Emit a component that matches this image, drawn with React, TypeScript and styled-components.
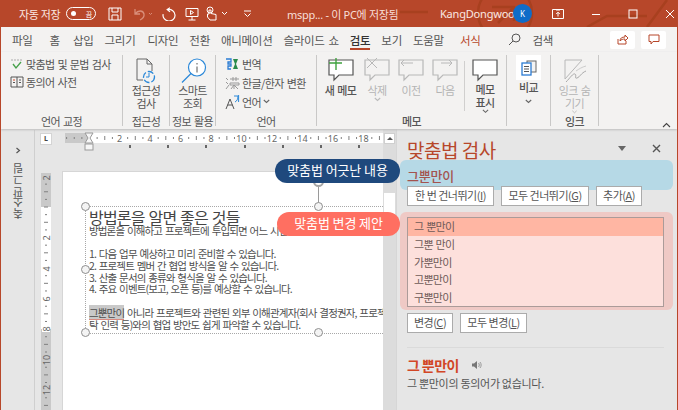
import React from "react";
import styled, { createGlobalStyle } from "styled-components";

const FONT = `"Noto Sans CJK KR", "Noto Sans", sans-serif`;

const GlobalStyle = createGlobalStyle`
  html, body { margin: 0; padding: 0; background: #e6e6e6; }
  * { box-sizing: border-box; }
`;

const Window = styled.div`
  width: 678px;
  height: 410px;
  overflow: hidden;
  display: flex;
  flex-direction: column;
  font-family: ${FONT};
  color: #444;
  border-left: 1px solid #b7472a;
  border-right: 1px solid #b7472a;
`;

/* title bar */
const TitleBar = styled.div`
  position: relative;
  height: 27px;
  margin: 0 -1px;
  flex: none;
  background: #b7472a;
  color: #fff;
  display: flex;
  align-items: center;
  font-size: 11px;
  letter-spacing: -0.3px;
`;
const Pattern = styled.svg`
  position: absolute;
  right: 0;
  top: 0;
`;
const AutoSave = styled.span`
  flex: none;
  width: 41px;
  margin-left: 19px;
  white-space: nowrap;
  color: #fbe9e3;
`;
const Toggle = styled.span`
  flex: none;
  width: 30px;
  height: 13px;
  margin-left: 6px;
  border: 1px solid #fff;
  border-radius: 7px;
  display: flex;
  align-items: center;
  justify-content: space-between;
  padding: 0 3px 0 4px;
  font-size: 7px;
  &::before {
    content: "";
    width: 5px;
    height: 5px;
    border-radius: 50%;
    background: #fff;
  }
`;
const QuickIcons = styled.div`
  flex: none;
  display: flex;
  align-items: center;
  margin-left: 12px;
  width: 158px;
`;
const QuickSlot = styled.span<{ $w: number }>`
  width: ${(p) => p.$w}px;
  display: flex;
  align-items: center;
`;
const DocName = styled.span`
  position: relative;
  flex: none;
  margin-left: 21px;
  width: 153px;
  font-family: "Noto Sans", ${FONT};
  font-size: 11px;
  letter-spacing: -0.3px;
  color: #f7dfd8;
  white-space: nowrap;
`;
const UserName = styled.span`
  position: relative;
  flex: none;
  width: 73px;
  font-family: "Noto Sans", sans-serif;
  font-size: 11px;
  letter-spacing: -0.2px;
  color: #fbe9e3;
`;
const Avatar = styled.span`
  position: relative;
  flex: none;
  width: 19px;
  height: 19px;
  border-radius: 50%;
  background: #0f6cc8;
  font-family: "Noto Sans", sans-serif;
  font-size: 8px;
  letter-spacing: 0;
  display: flex;
  align-items: center;
  justify-content: center;
`;
const WinButtons = styled.div`
  position: relative;
  display: flex;
  align-items: center;
  margin-left: 20px;
  gap: 27px;
`;

/* tabs */
const TabRow = styled.div`
  height: 25px;
  flex: none;
  background: #f3f2f1;
  display: flex;
  align-items: center;
  padding: 0 11px;
  gap: 11px;
  font-size: 11.5px;
  letter-spacing: -0.28px;
  word-spacing: 1.5px;
  color: #555;
`;
const Tab = styled.span<{ $extra?: number; $active?: boolean; $accent?: boolean }>`
  position: relative;
  margin-left: ${(p) => p.$extra ?? 0}px;
  white-space: nowrap;
  font-weight: ${(p) => (p.$active ? 500 : 400)};
  color: ${(p) => (p.$accent ? "#b7472a" : p.$active ? "#333" : "#555")};
  &::after {
    content: "";
    display: ${(p) => (p.$active ? "block" : "none")};
    position: absolute;
    left: 0;
    right: 0;
    bottom: -2px;
    height: 2px;
    background: #b7472a;
  }
`;
const SearchTab = styled.span`
  display: flex;
  align-items: center;
  gap: 11px;
  margin-left: 17px;
`;
const TabButton = styled.span<{ $first?: boolean }>`
  width: 25px;
  height: 18px;
  margin-left: ${(p) => (p.$first ? "auto" : "-5px")};
  background: #fff;
  border-radius: 2px;
  display: flex;
  align-items: center;
  justify-content: center;
`;

/* ribbon */
const Ribbon = styled.div`
  position: relative;
  height: 77px;
  flex: none;
  background: #f3f2f1;
  display: flex;
  font-size: 11px;
  letter-spacing: -0.6px;
  word-spacing: 1px;
  box-shadow: 0 1px 2px #bdbdbd;
  z-index: 2;
`;
const Group = styled.div<{ $w: number }>`
  position: relative;
  width: ${(p) => p.$w}px;
  flex: none;
  border-right: 1px solid #c9c8c7;
  margin: 3px 0;
  display: flex;
  flex-direction: column;
`;
const GroupBody = styled.div`
  flex: 1;
  display: flex;
  min-height: 0;
`;
const GroupLabel = styled.div<{ $strong?: boolean }>`
  height: 15px;
  margin-bottom: -3px;
  flex: none;
  text-align: center;
  line-height: 15px;
  font-weight: ${(p) => (p.$strong ? 500 : 400)};
  color: #555;
  white-space: nowrap;
`;
const Rows = styled.div<{ $gap: number; $left: number }>`
  display: flex;
  flex-direction: column;
  gap: ${(p) => p.$gap}px;
  padding: 1px 0 0 ${(p) => p.$left}px;
`;
const SmallRow = styled.div`
  display: flex;
  align-items: center;
  gap: 2px;
  height: 15px;
  white-space: nowrap;
  color: #555;
`;
const BigButton = styled.div<{ $w: number; $muted?: boolean; $boxed?: boolean; $strong?: boolean }>`
  width: ${(p) => p.$w}px;
  flex: none;
  display: flex;
  flex-direction: column;
  align-items: center;
  padding-top: ${(p) => (p.$boxed ? 0 : 3)}px;
  line-height: 13px;
  text-align: center;
  white-space: nowrap;
  font-weight: ${(p) => (p.$strong ? 500 : 400)};
  color: ${(p) => (p.$muted ? "#b4b4b4" : "#555")};
`;
const IconBox = styled.div<{ $boxed?: boolean }>`
  height: ${(p) => (p.$boxed ? 25 : 26)}px;
  width: ${(p) => (p.$boxed ? "25px" : "auto")};
  margin-bottom: ${(p) => (p.$boxed ? 1 : 0)}px;
  background: ${(p) => (p.$boxed ? "#fff" : "transparent")};
  display: flex;
  align-items: center;
  justify-content: center;
`;
const LowChevron = styled.span`
  display: flex;
  margin-top: 5px;
`;
const InnerSep = styled.div`
  width: 1px;
  height: 50px;
  margin: 6px 0 0 6px;
  background: #d0cfce;
`;
const Collapse = styled.svg`
  position: absolute;
  right: 6px;
  bottom: 1px;
`;

/* work area */
const Work = styled.div`
  flex: 1;
  min-height: 0;
  display: flex;
  background: #e6e6e6;
`;
const ThumbPane = styled.div`
  width: 34px;
  flex: none;
  border-right: 1px solid #cfcfcf;
  display: flex;
  flex-direction: column;
  align-items: center;
  padding-top: 17px;
  margin-top: 1px;
`;
const ThumbLabel = styled.span`
  margin-top: 9px;
  writing-mode: vertical-rl;
  transform: rotate(180deg);
  font-size: 11px;
  letter-spacing: -0.3px;
  color: #555;
`;
const Editor = styled.div`
  flex: 1;
  min-width: 0;
  display: flex;
`;
const Canvas = styled.div`
  position: relative;
  flex: 1;
  min-width: 0;
  overflow: hidden;
`;
const RulerCorner = styled.div`
  position: absolute;
  left: 5px;
  top: 4px;
  width: 12px;
  height: 12px;
  background: #fff;
  border: 1px solid #d4d4d4;
  font: 700 7px/10px "Noto Sans", sans-serif;
  text-align: center;
`;
const RulerSvg = styled.svg`
  position: absolute;
`;
const Slide = styled.div`
  position: absolute;
  left: 28px;
  top: 43px;
  width: 400px;
  height: 300px;
  background: #fff;
  box-shadow: 0 0 0 1px #d6d6d6;
`;
const TextBox = styled.div`
  position: absolute;
  left: 22px;
  top: 34px;
  width: 480px;
  height: 128px;
  border: 1px dotted #a8a8a8;
  padding: 0 0 0 3px;
  color: #4a4a4a;
`;
const Heading = styled.div`
  height: 18px;
  font-size: 16px;
  line-height: 21px;
  letter-spacing: -0.8px;
  word-spacing: 1px;
  color: #444;
`;
const BodyLine = styled.div`
  font-size: 10.5px;
  line-height: 11.7px;
  height: 11.7px;
  letter-spacing: -0.85px;
  word-spacing: 1.2px;
  white-space: nowrap;
  color: #4f4f4f;
`;
const Misspelled = styled.span`
  background: #c9c9c9;
  box-shadow: inset 0 -1px 0 #d98a80;
`;
const Handle = styled.span<{ $x: number; $y: number }>`
  position: absolute;
  left: ${(p) => p.$x}px;
  top: ${(p) => p.$y}px;
  width: 9px;
  height: 9px;
  border: 1.5px solid #8f8f8f;
  border-radius: 50%;
  background: #f4f4f4;
`;
const RotateHandle = styled.span`
  position: absolute;
  left: 227px;
  top: -31px;
  width: 11px;
  height: 11px;
  border: 2px solid #a5a5a5;
  border-radius: 50%;
`;
const RotateStem = styled.span`
  position: absolute;
  left: 232px;
  top: -20px;
  width: 1px;
  height: 16px;
  background: #9a9a9a;
`;
const ScrollBar = styled.div`
  width: 13px;
  flex: none;
  background: #dcdcdc;
  padding-top: 4px;
  display: flex;
  flex-direction: column;
  align-items: center;
`;
const ScrollUp = styled.div`
  width: 11px;
  height: 11px;
  background: #fff;
  border: 1px solid #cfcfcf;
  display: flex;
  align-items: center;
  justify-content: center;
  &::before {
    content: "";
    border: 3px solid transparent;
    border-top: 0;
    border-bottom: 3px solid #555;
  }
`;
const ScrollThumb = styled.div`
  width: 11px;
  height: 34px;
  margin-top: 49px;
  background: #fff;
`;

/* spelling pane */
const Pane = styled.div`
  position: relative;
  width: 281px;
  flex: none;
  background: #e6e6e6;
  border-left: 1px solid #d6d6d6;
  padding: 8px 13px 0 10px;
`;
const Highlight = styled.div<{ $top: number; $h: number; $c: string }>`
  position: absolute;
  left: 3px;
  right: 4px;
  top: ${(p) => p.$top}px;
  height: ${(p) => p.$h}px;
  border-radius: 6px;
  background: ${(p) => p.$c};
`;
const PaneInner = styled.div`
  position: relative;
`;
const PaneHead = styled.div`
  display: flex;
  align-items: center;
  justify-content: space-between;
  height: 25px;
`;
const PaneTitle = styled.div`
  font-size: 19px;
  letter-spacing: -0.5px;
  color: #b7472a;
`;
const PaneTools = styled.div`
  display: flex;
  align-items: center;
  gap: 26px;
  margin: 0 3px 3px 0;
`;
const BadWord = styled.div`
  margin-top: 5px;
  height: 18px;
  font-size: 13px;
  font-weight: 500;
  line-height: 18px;
  letter-spacing: -0.2px;
  color: #a4534f;
`;
const ButtonRow = styled.div<{ $mt: number }>`
  display: flex;
  gap: 7px;
  margin-top: ${(p) => p.$mt}px;
`;
const PaneButton = styled.div<{ $w: number }>`
  width: ${(p) => p.$w}px;
  height: 20px;
  background: #fff;
  border: 1px solid #ababab;
  font-size: 11px;
  line-height: 17px;
  letter-spacing: -0.5px;
  text-align: center;
  white-space: nowrap;
  color: #555;
`;
const List = styled.div`
  margin-top: 11px;
  width: 257px;
  height: 90px;
  background: #fde0dc;
  border: 1px solid #ab9b99;
`;
const ListRow = styled.div<{ $sel?: boolean }>`
  height: 17.8px;
  padding-left: 6px;
  background: ${(p) => (p.$sel ? "#ffb6a3" : "transparent")};
  font-size: 11px;
  line-height: 17px;
  letter-spacing: -0.7px;
  word-spacing: 1px;
  color: #6e5a58;
`;
const Divider = styled.div`
  height: 1px;
  margin-top: 14px;
  background: #dadada;
`;
const DefHead = styled.div`
  display: flex;
  align-items: center;
  gap: 12px;
  margin-top: 7px;
  height: 20px;
  font-size: 14px;
  font-weight: 700;
  letter-spacing: -0.6px;
  color: #d24726;
`;
const DefText = styled.div`
  font-size: 11px;
  letter-spacing: -0.3px;
  color: #555;
`;

/* callouts */
const Callout = styled.div<{ $top: number; $left: number; $w: number; $c: string }>`
  position: absolute;
  z-index: 3;
  left: ${(p) => p.$left}px;
  top: ${(p) => p.$top}px;
  width: ${(p) => p.$w}px;
  height: 24px;
  border-radius: 12px;
  background: ${(p) => p.$c};
  color: #fff;
  font-size: 13px;
  line-height: 22px;
  letter-spacing: -0.1px;
  text-align: center;
  white-space: nowrap;
`;

const Chevron = ({ c = "#666" }: { c?: string }) => (
  <svg width="7" height="5" viewBox="0 0 7 5">
    <path d="M.8 1l2.7 2.5L6.200 1" fill="none" stroke={c} strokeWidth="1.1" />
  </svg>
);

const Bubble = ({ c, children }: { c: string; children?: React.ReactNode }) => (
  <svg width="26" height="24" viewBox="0 0 26 24" style={{ overflow: "visible" }}>
    <path d="M1 1h24v15H11l-5 5v-5H1z" fill={c === "#b8b8b8" ? "#f3f2f1" : "#fff"} stroke={c} strokeWidth="1.2" />
    {children}
  </svg>
);

const rulerNums = [2, 4, 6, 8, 10, 12, 14, 16, 18];

const HRuler = () => (
  <RulerSvg width="320" height="20" viewBox="0 0 320 20" style={{ left: 30, top: 3 }}>
    <rect x="0" y="1" width="24" height="10" fill="#c9c9c9" />
    <rect x="24" y="1" width="294" height="10" fill="#fff" />
    {Array.from({ length: 42 }, (_, i) => {
      const x = 24 + (i - 3) * 7.63;
      if ((i - 3) % 4 === 0 && i > 3) return null;
      return <rect key={i} x={x} y={(i - 3) % 4 === 2 ? 4 : 5} width="1" height={(i - 3) % 4 === 2 ? 4 : 2} fill="#808080" />;
    })}
    {rulerNums.map((n) => (
      <text key={n} x={24 + n * 15.25} y="9.500" textAnchor="middle" fontSize="9" fontFamily="Noto Sans" fill="#666">
        {n}
      </text>
    ))}
    {[64, 102, 140, 179, 217, 255, 293].map((x) => (
      <rect key={x} x={x} y="13" width="2" height="3" fill="#666" />
    ))}
    <path d="M20 1h8l-3 5 3 5h-8l3-5z" fill="#f6f6f6" stroke="#999" />
    <rect x="20" y="12" width="8" height="6" fill="#f6f6f6" stroke="#999" />
  </RulerSvg>
);

const VRuler = () => (
  <RulerSvg width="12" height="240" viewBox="0 0 12 240" style={{ left: 6, top: 44 }}>
    <rect x="0" y="0" width="10" height="34" fill="#c9c9c9" />
    <rect x="0" y="34" width="10" height="122" fill="#fff" />
    <rect x="0" y="156" width="10" height="84" fill="#c9c9c9" />
    {Array.from({ length: 32 }, (_, i) => (
      <rect key={i} x={i % 2 ? 4 : 3} y={3 + i * 7.63} width={i % 2 ? 2 : 4} height="1" fill="#808080" />
    ))}
    {[
      [5, "2"],
      [65, "2"],
      [96, "4"],
      [126, "6"],
      [156, "8"],
      [187, "10"],
      [217, "12"],
    ].map(([y, t]) => (
      <g key={String(y)}>
        <rect x="1" y={Number(y) - (String(t).length > 1 ? 6 : 3)} width="8" height={String(t).length > 1 ? 12 : 6} fill={Number(y) < 34 || Number(y) > 156 ? "#c9c9c9" : "#fff"} />
        <text
          transform={`translate(8.500 ${y}) rotate(-90)`}
          textAnchor="middle"
          fontSize="9"
          fontFamily="Noto Sans"
          fill="#666"
        >
          {t}
        </text>
      </g>
    ))}
  </RulerSvg>
);

const RibbonPart = () => (
  <Ribbon>
    <Group $w={122}>
      <GroupBody>
        <Rows $gap={3} $left={9}>
          <SmallRow>
            <svg width="14" height="12" viewBox="0 0 14 12">
              <path d="M1 2h12" stroke="#aaa" strokeDasharray="2 1" />
              <path d="M3 6l3 4 5-6" fill="none" stroke="#46a04a" strokeWidth="1.3" />
            </svg>
            맞춤법 및 문법 검사
          </SmallRow>
          <SmallRow>
            <svg width="14" height="12" viewBox="0 0 14 12">
              <path d="M1 1h12v10H1zM7 1v10M3 6.500h2M9 4h2M9 6.500h2" fill="none" stroke="#555" />
              <path d="M3 4h2" stroke="#d24726" />
            </svg>
            동의어 사전
          </SmallRow>
        </Rows>
      </GroupBody>
      <GroupLabel>언어 교정</GroupLabel>
    </Group>
    <Group $w={47}>
      <GroupBody>
        <BigButton $w={46}>
          <IconBox>
            <svg width="24" height="26" viewBox="0 0 24 26">
              <path d="M3 1h10l5 5v7M13 1v5h5M3 1v21h6" fill="none" stroke="#666" />
              <circle cx="15" cy="19" r="5.500" fill="none" stroke="#2b88d8" strokeWidth="1.3" strokeDasharray="6 2" />
              <path d="M15 15v4h-3" fill="none" stroke="#2b88d8" />
            </svg>
          </IconBox>
          접근성
          <br />
          검사
        </BigButton>
      </GroupBody>
      <GroupLabel>접근성</GroupLabel>
    </Group>
    <Group $w={46}>
      <GroupBody>
        <BigButton $w={45}>
          <IconBox>
            <svg width="28" height="26" viewBox="0 0 28 26">
              <circle cx="18" cy="9.500" r="8.500" fill="#fff" stroke="#2b88d8" strokeWidth="1.2" />
              <path d="M12 15.500l-9 9" stroke="#2b88d8" strokeWidth="1.3" />
              <path d="M18 8.500v6M18 5v1.500" stroke="#555" />
            </svg>
          </IconBox>
          스마트
          <br />
          조회
        </BigButton>
      </GroupBody>
      <GroupLabel>정보 활용</GroupLabel>
    </Group>
    <Group $w={101}>
      <GroupBody>
        <Rows $gap={4} $left={9}>
          <SmallRow>
            <svg width="15" height="14" viewBox="0 0 15 14">
              <path d="M1 2h5v3H3v2h3v2H3v3h3" fill="none" stroke="#2b7cd3" strokeWidth="1.3" />
              <path d="M8 2h5l-2 5 2 5H8l2-5z" fill="#2a8a4a" />
            </svg>
            번역
          </SmallRow>
          <SmallRow>
            <svg width="15" height="14" viewBox="0 0 15 14">
              <path d="M1 2l2 2M1 6l2 2M1 13l3-4M5 3h9M8 1v4M11 1v4M5 7h9v2H5zM9 9v4M6 13l3-4 4 4" fill="none" stroke="#999" />
            </svg>
            한글/한자 변환
          </SmallRow>
          <SmallRow>
            <svg width="15" height="16" viewBox="0 0 15 16">
              <path d="M1 15l4-10 4 10M2.600 11h5" fill="none" stroke="#555" />
              <path d="M9 2h4c0 3-1 5-3 6M13.600 1v7" fill="none" stroke="#2b88d8" />
            </svg>
            언어 <Chevron />
          </SmallRow>
        </Rows>
      </GroupBody>
      <GroupLabel>언어</GroupLabel>
    </Group>
    <Group $w={190}>
      <GroupBody>
        <BigButton $w={47} $strong>
          <IconBox>
            <Bubble c="#555">
              <path d="M8 -1v12M1 4h13" stroke="#3fa33f" strokeWidth="1.4" />
            </Bubble>
          </IconBox>
          새 메모
        </BigButton>
        <BigButton $w={26} $muted>
          <IconBox>
            <Bubble c="#b8b8b8">
              <path d="M3 -1l10 10M13 -1l-10 10" stroke="#b8b8b8" />
            </Bubble>
          </IconBox>
          삭제
          <Chevron c="#bbb" />
        </BigButton>
        <BigButton $w={42} $muted>
          <IconBox>
            <Bubble c="#b8b8b8">
              <path d="M15 4H3l3-3M3 4l3 3" fill="none" stroke="#b8b8b8" />
            </Bubble>
          </IconBox>
          이전
        </BigButton>
        <BigButton $w={26} $muted>
          <IconBox>
            <Bubble c="#b8b8b8">
              <path d="M9 4h11l-3-3M20 4l-3 3" fill="none" stroke="#b8b8b8" />
            </Bubble>
          </IconBox>
          다음
        </BigButton>
        <InnerSep />
        <BigButton $w={40} $strong>
          <IconBox>
            <Bubble c="#555" />
          </IconBox>
          메모
          <br />
          표시 <Chevron />
        </BigButton>
      </GroupBody>
      <GroupLabel $strong>메모</GroupLabel>
    </Group>
    <Group $w={44}>
      <GroupBody>
        <BigButton $w={43} $boxed $strong>
          <IconBox $boxed>
            <svg width="16" height="16" viewBox="0 0 16 16">
              <rect x="6" y="1" width="9" height="11" fill="#f3f3f3" stroke="#666" />
              <rect x="1" y="3" width="9" height="12" fill="#fff" stroke="#2b7cd3" strokeWidth="1.3" />
              <path d="M3 6.500h5M3 9h5M3 11.500h5" stroke="#555" />
            </svg>
          </IconBox>
          비교
          <LowChevron>
            <Chevron />
          </LowChevron>
        </BigButton>
      </GroupBody>
      <GroupLabel />
    </Group>
    <Group $w={48}>
      <GroupBody>
        <BigButton $w={47} $muted>
          <IconBox>
            <svg width="28" height="26" viewBox="0 0 28 26">
              <path d="M4 2h17L4 21z" fill="#f3f2f1" stroke="#b8b8b8" />
              <path d="M5 24c4-4 7-9 9-8s-1 5 2 4 4-5 9-7" fill="none" stroke="#aaa" />
              <path d="M15 13c3-2 6-4 10-5" fill="none" stroke="#ccc" />
            </svg>
          </IconBox>
          잉크 숨
          <br />
          기기 <Chevron c="#bbb" />
        </BigButton>
      </GroupBody>
      <GroupLabel $strong>잉크</GroupLabel>
    </Group>
    <Collapse width="9" height="6" viewBox="0 0 9 6">
      <path d="M1 5l3.500-3.500L8 5" fill="none" stroke="#444" strokeWidth="1.1" />
    </Collapse>
  </Ribbon>
);

export default function App() {
  return (
    <>
      <GlobalStyle />
      <Window>
        <TitleBar>
          <Pattern width="278" height="27" viewBox="0 0 278 27">
            <g fill="none" stroke="#a8401f" strokeWidth="2.5">
              <circle cx="105" cy="13" r="27" />
              <path d="M92 7h22v14M114 7l-16 16M0 12h28M187 27l20-11h40M247 27l20-27" />
            </g>
          </Pattern>
          <AutoSave>자동 저장</AutoSave>
          <Toggle>끔</Toggle>
          <QuickIcons>
            <QuickSlot $w={24}>
              <svg width="14" height="14" viewBox="0 0 14 14">
                <path d="M1 1h12v12H1zM4 1v4h6V1M4 13V8h6v5" fill="none" stroke="#fff" />
              </svg>
            </QuickSlot>
            <QuickSlot $w={30}>
              <svg width="22" height="14" viewBox="0 0 22 14">
                <path d="M3 2v5h5M3 7c3-4 8-4 9 0 .5 3-2 5-4 6" fill="none" stroke="#d98d79" strokeWidth="1.3" />
                <path d="M17 6l1.500 1.500L20 6" fill="none" stroke="#d98d79" />
              </svg>
            </QuickSlot>
            <QuickSlot $w={23}>
              <svg width="14" height="14" viewBox="0 0 14 14">
                <path d="M8 .8L5.200 2.500 8 4.800M5.500 2.500C9.500 1.800 13 4.500 13 8a6 5.500 0 1 1-11.800-.8" fill="none" stroke="#fff" strokeWidth="1.2" />
              </svg>
            </QuickSlot>
            <QuickSlot $w={20}>
              <svg width="14" height="14" viewBox="0 0 14 14">
                <path d="M1 1.500h12v8H1zM7 9.500V13M3.500 13h7M5.500 3.500v4l3-2z" fill="none" stroke="#fff" />
              </svg>
            </QuickSlot>
            <QuickSlot $w={38}>
              <svg width="24" height="15" viewBox="0 0 24 15">
                <circle cx="5" cy="4" r="3" fill="none" stroke="#fff" />
                <path d="M4 4v4H2.500v3L5 14h6V8.500L6 7.500V4z" fill="none" stroke="#fff" />
                <path d="M17 6l2.500 2.500L22 6" fill="none" stroke="#fff" />
              </svg>
            </QuickSlot>
            <svg width="9" height="9" viewBox="0 0 9 9">
              <path d="M1 2h7M1.500 4.500l3 3 3-3" fill="none" stroke="#fff" />
            </svg>
          </QuickIcons>
          <DocName>mspp... - 이 PC에 저장됨</DocName>
          <UserName>KangDongwoo</UserName>
          <Avatar>K</Avatar>
          <WinButtons>
            <svg width="12" height="10" viewBox="0 0 12 10">
              <path d="M.5.500h11v9H.5zM4 1h4M6 7.500V3.500M4.200 5L6 3.200 7.800 5" fill="none" stroke="#fff" />
            </svg>
            <svg width="10" height="10" viewBox="0 0 10 10">
              <path d="M1 5.500h8" stroke="#fff" />
            </svg>
            <svg width="10" height="10" viewBox="0 0 10 10">
              <rect x="1" y="1" width="8" height="8" fill="none" stroke="#fff" />
            </svg>
            <svg width="10" height="10" viewBox="0 0 10 10">
              <path d="M1 1l8 8M9 1l-8 8" stroke="#fff" />
            </svg>
          </WinButtons>
        </TitleBar>
        <TabRow>
          <Tab>파일</Tab>
          <Tab $extra={6}>홈</Tab>
          <Tab $extra={2}>삽입</Tab>
          <Tab>그리기</Tab>
          <Tab $extra={1}>디자인</Tab>
          <Tab>전환</Tab>
          <Tab>애니메이션</Tab>
          <Tab>슬라이드 쇼</Tab>
          <Tab $active>검토</Tab>
          <Tab>보기</Tab>
          <Tab>도움말</Tab>
          <Tab $accent $extra={5}>
            서식
          </Tab>
          <SearchTab>
            <svg width="13" height="13" viewBox="0 0 13 13">
              <circle cx="8" cy="5" r="4" fill="none" stroke="#555" />
              <path d="M5 8l-4 4" stroke="#555" />
            </svg>
            검색
          </SearchTab>
          <TabButton $first>
            <svg width="12" height="11" viewBox="0 0 12 11">
              <path d="M1 5v5h8V7M3 7c0-3 2-4 5-4V1l3 3-3 3V5C6 5 4 5.500 3 7z" fill="none" stroke="#b7472a" />
            </svg>
          </TabButton>
          <TabButton>
            <svg width="12" height="11" viewBox="0 0 12 11">
              <path d="M1 1h10v6.500H5L3 10V7.500H1z" fill="none" stroke="#b7472a" />
            </svg>
          </TabButton>
        </TabRow>
        <RibbonPart />
        <Work>
          <ThumbPane>
            <svg width="6" height="7" viewBox="0 0 6 7">
              <path d="M1.500 1l3 2.500-3 2.500" fill="none" stroke="#555" strokeWidth="1.2" />
            </svg>
            <ThumbLabel>축소판 그림</ThumbLabel>
          </ThumbPane>
          <Editor>
            <Canvas>
              <RulerCorner>L</RulerCorner>
              <HRuler />
              <VRuler />
              <Slide>
                <TextBox>
                  <RotateHandle />
                  <RotateStem />
                  <Handle $x={-5} $y={-5} />
                  <Handle $x={228} $y={-5} />
                  <Handle $x={-5} $y={58} />
                  <Handle $x={-5} $y={121} />
                  <Handle $x={228} $y={121} />
                  <Heading>방법론을 알면 좋은 것들</Heading>
                  <BodyLine>방법론을 이해하고 프로젝트에 투입되면 어느 시점에 어떤 일을 해야 할지 알게 됩니다.</BodyLine>
                  <BodyLine />
                  <BodyLine>1. 다음 업무 예상하고 미리 준비할 수 있습니다.</BodyLine>
                  <BodyLine>2. 프로젝트 멤버 간 협업 방식을 알 수 있습니다.</BodyLine>
                  <BodyLine>3. 산출 문서의 종류와 형식을 알 수 있습니다.</BodyLine>
                  <BodyLine>4. 주요 이벤트(보고, 오픈 등)를 예상할 수 있습니다.</BodyLine>
                  <BodyLine />
                  <BodyLine>
                    <Misspelled>그뿐만이</Misspelled> 아니라 프로젝트와 관련된 외부 이해관계자(회사 결정권자, 프로젝트 위
                  </BodyLine>
                  <BodyLine>탁 인력 등)와의 협업 방안도 쉽게 파악할 수 있습니다.</BodyLine>
                </TextBox>
              </Slide>
            </Canvas>
            <ScrollBar>
              <ScrollUp />
              <ScrollThumb />
            </ScrollBar>
          </Editor>
          <Pane>
            <Highlight $top={31} $h={30} $c="#b6d9e6" />
            <Highlight $top={83} $h={98} $c="#efc9c5" />
            <PaneInner>
              <PaneHead>
                <PaneTitle>맞춤법 검사</PaneTitle>
                <PaneTools>
                  <svg width="8" height="5" viewBox="0 0 8 5">
                    <path d="M0 0h8L4 5z" fill="#666" />
                  </svg>
                  <svg width="9" height="9" viewBox="0 0 9 9">
                    <path d="M1 1l7 7M8 1l-7 7" stroke="#555" strokeWidth="1.4" />
                  </svg>
                </PaneTools>
              </PaneHead>
              <BadWord>그뿐만이</BadWord>
              <ButtonRow $mt={1}>
                <PaneButton $w={87}>
                  한 번 건너뛰기(<u>I</u>)
                </PaneButton>
                <PaneButton $w={88}>
                  모두 건너뛰기(<u>G</u>)
                </PaneButton>
                <PaneButton $w={46}>
                  추가(<u>A</u>)
                </PaneButton>
              </ButtonRow>
              <List>
                <ListRow $sel>그 뿐만이</ListRow>
                <ListRow>그뿐 만이</ListRow>
                <ListRow>가뿐만이</ListRow>
                <ListRow>고뿐만이</ListRow>
                <ListRow>구뿐만이</ListRow>
              </List>
              <ButtonRow $mt={6}>
                <PaneButton $w={46}>
                  변경(<u>C</u>)
                </PaneButton>
                <PaneButton $w={67}>
                  모두 변경(<u>L</u>)
                </PaneButton>
              </ButtonRow>
              <Divider />
              <DefHead>
                그 뿐만이
                <svg width="11" height="10" viewBox="0 0 11 10">
                  <path d="M1 3.500h2L6 1v8L3 6.500H1z" fill="#777" />
                  <path d="M7.500 3c1 1 1 3 0 4M9 2c1.500 2 1.500 4 0 6" fill="none" stroke="#999" />
                </svg>
              </DefHead>
              <DefText>그 뿐만이의 동의어가 없습니다.</DefText>
            </PaneInner>
          </Pane>
        </Work>
        <Callout $top={159} $left={275} $w={125} $c="#1f497d">
          맞춤법 어긋난 내용
        </Callout>
        <Callout $top={212} $left={277} $w={123} $c="#ff6f61">
          맞춤법 변경 제안
        </Callout>
      </Window>
    </>
  );
}
